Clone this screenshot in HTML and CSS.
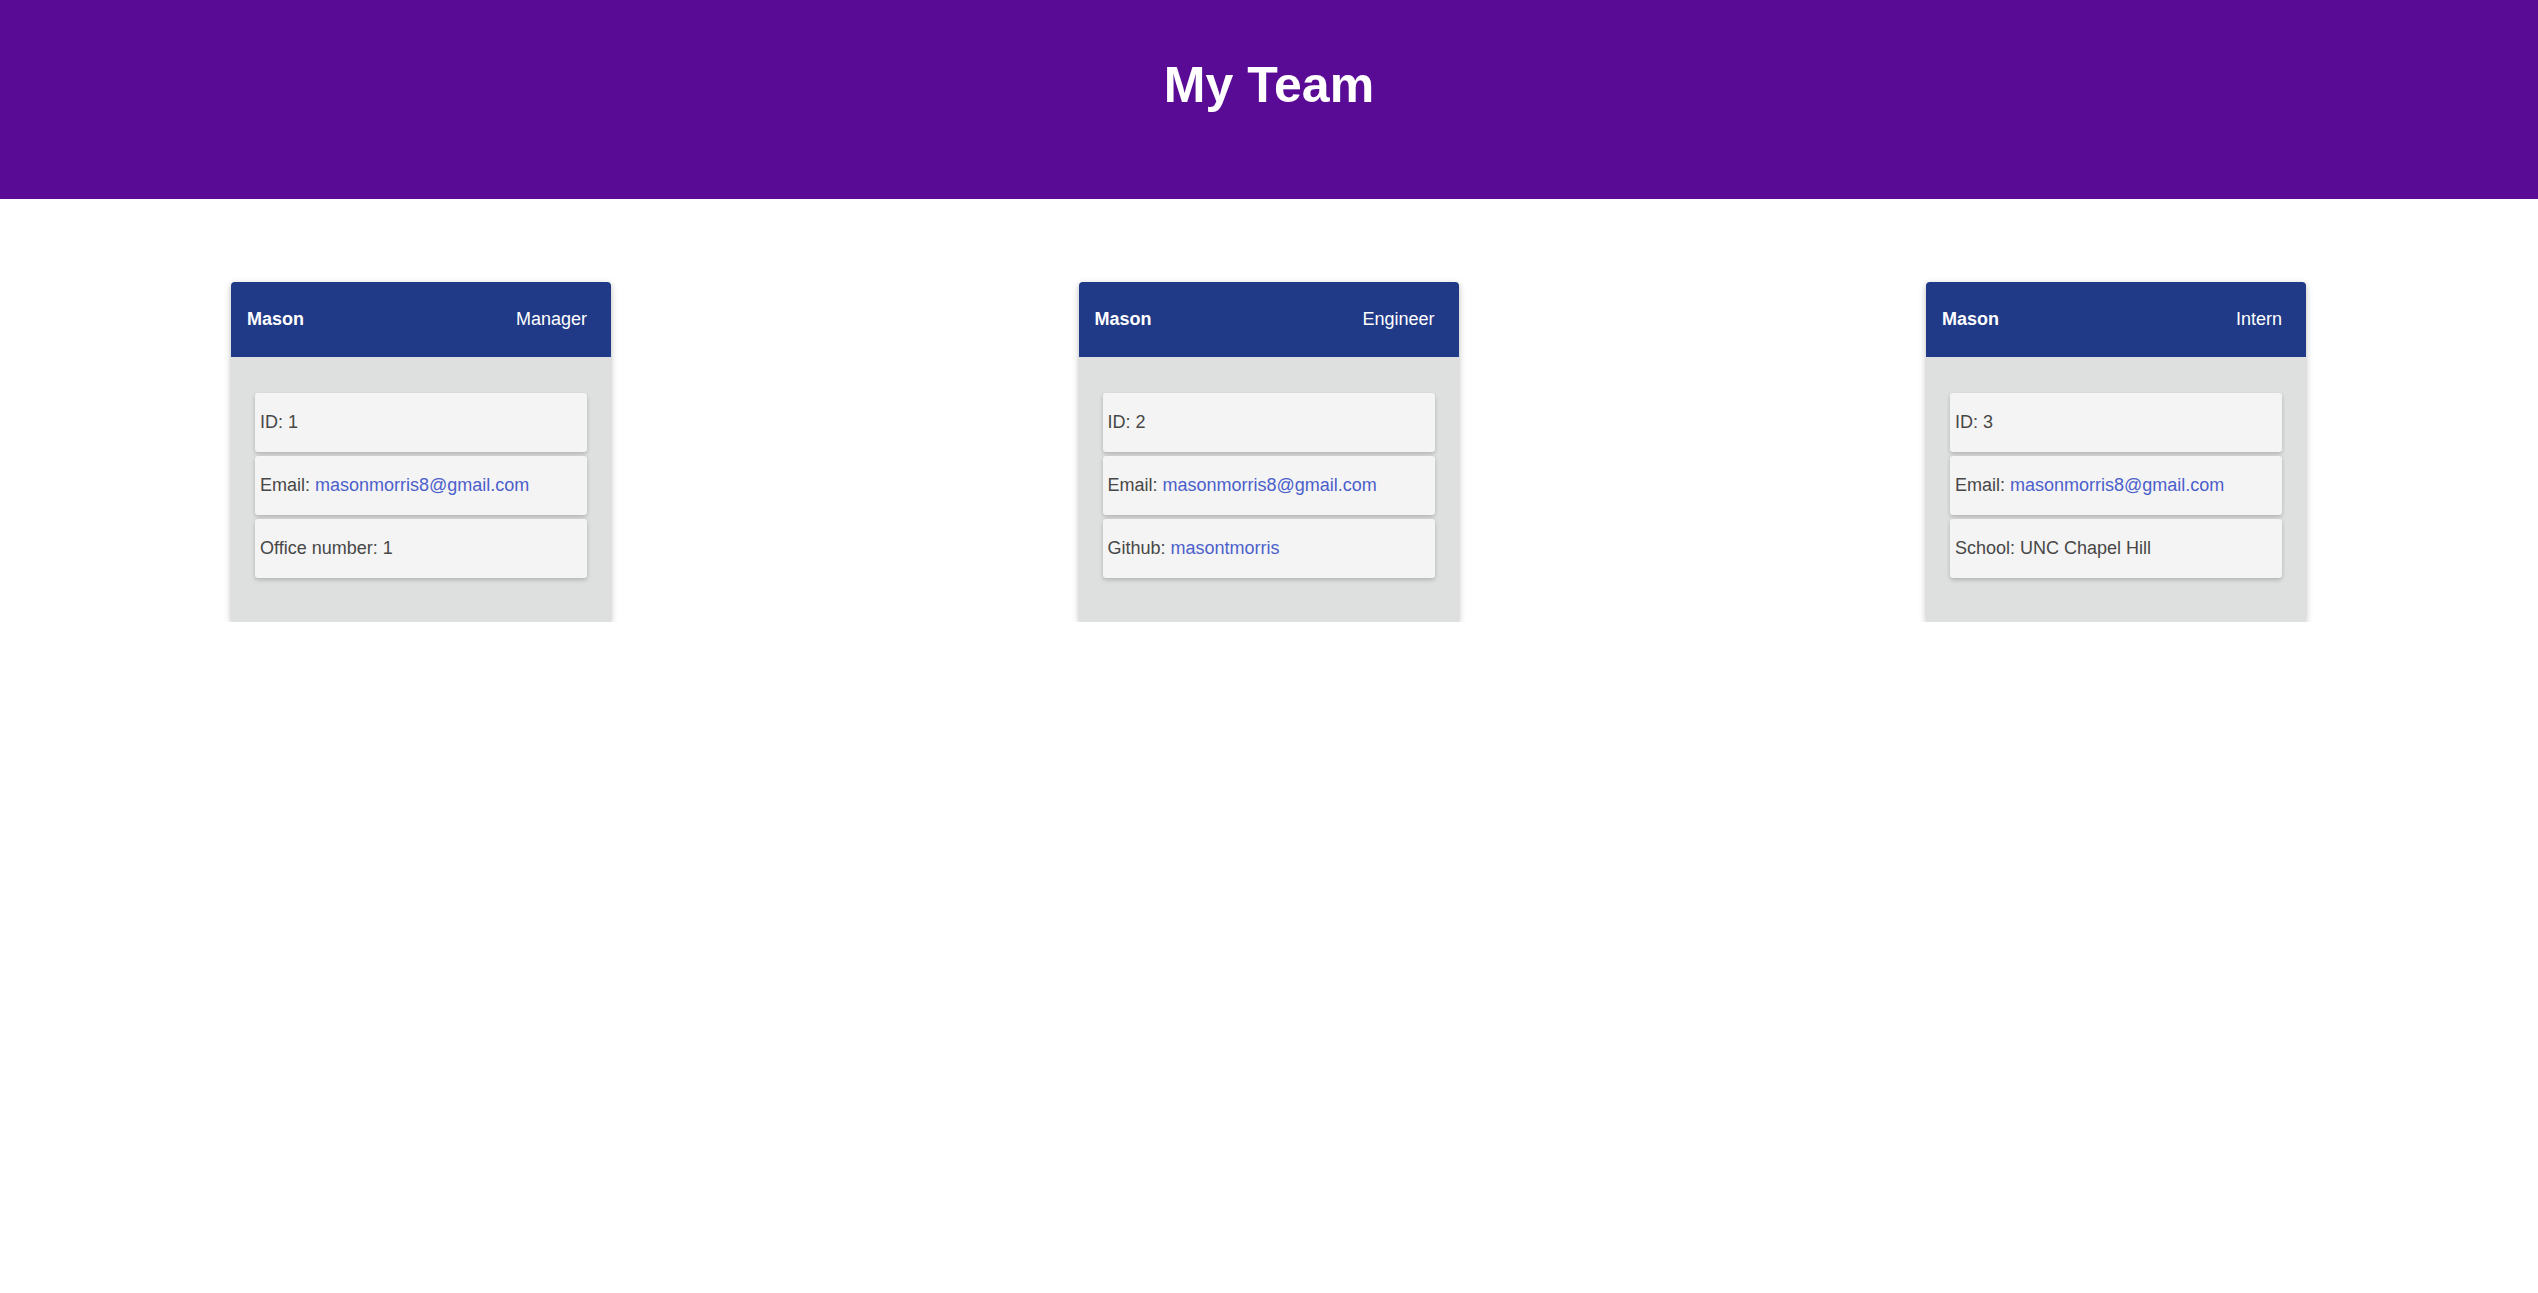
FILE: index.html
```html
<!DOCTYPE html>
<html lang="en">
<head>
<meta charset="UTF-8">
<title>My Team</title>
<link rel="stylesheet" href="styles.css">
</head>
<body>
<header class="banner">
  <h1 class="banner-title">My Team</h1>
</header>
<main class="team">
  <div class="card">
    <div class="card-head"><span class="name">Mason</span><span class="role">Manager</span></div>
    <div class="card-body">
      <div class="item">ID: 1</div>
      <div class="item">Email: <a class="link" href="#">masonmorris8@gmail.com</a></div>
      <div class="item">Office number: 1</div>
    </div>
  </div>
  <div class="card">
    <div class="card-head"><span class="name">Mason</span><span class="role">Engineer</span></div>
    <div class="card-body">
      <div class="item">ID: 2</div>
      <div class="item">Email: <a class="link" href="#">masonmorris8@gmail.com</a></div>
      <div class="item">Github: <a class="link" href="#">masontmorris</a></div>
    </div>
  </div>
  <div class="card">
    <div class="card-head"><span class="name">Mason</span><span class="role">Intern</span></div>
    <div class="card-body">
      <div class="item">ID: 3</div>
      <div class="item">Email: <a class="link" href="#">masonmorris8@gmail.com</a></div>
      <div class="item">School: UNC Chapel Hill</div>
    </div>
  </div>
</main>
</body>
</html>
```
FILE: styles.css
```css
* { box-sizing: border-box; }
html, body { margin: 0; padding: 0; background: #ffffff; }
body {
  font-family: "Liberation Sans", Arial, sans-serif;
  color: #474747;
}
.banner {
  height: 199px;
  background: #5a0b96;
  display: flex;
  justify-content: center;
  padding-top: 51px;
}
.banner-title {
  margin: 0;
  color: #ffffff;
  font-size: 50px;
  font-weight: bold;
  line-height: 68px;
  height: 68px;
}
.team {
  display: flex;
  justify-content: space-between;
  align-items: flex-start;
  padding: 83px 232px 0 231px;
}
.card {
  width: 380px;
  border-radius: 4px;
  overflow: hidden;
  background: #dedfdf;
  box-shadow: 0 2px 5px rgba(0,0,0,0.16), 0 2px 10px rgba(0,0,0,0.12);
}
.card-head {
  height: 75px;
  background: #203a88;
  color: #ffffff;
  display: flex;
  align-items: center;
  justify-content: space-between;
  padding: 0 24px 0 16px;
  font-size: 18px;
}
.name { font-weight: bold; }
.card-body {
  padding: 36px 24px 44px 24px;
  display: flex;
  flex-direction: column;
  gap: 4px;
}
.item {
  height: 59px;
  display: flex;
  align-items: center;
  padding-left: 5px;
  background: #f4f4f4;
  border-radius: 3px;
  font-size: 18px;
  white-space: pre;
  box-shadow: 0 2px 4px rgba(0,0,0,0.2);
}
.link { color: #4b5fcb; text-decoration: none; }
```
